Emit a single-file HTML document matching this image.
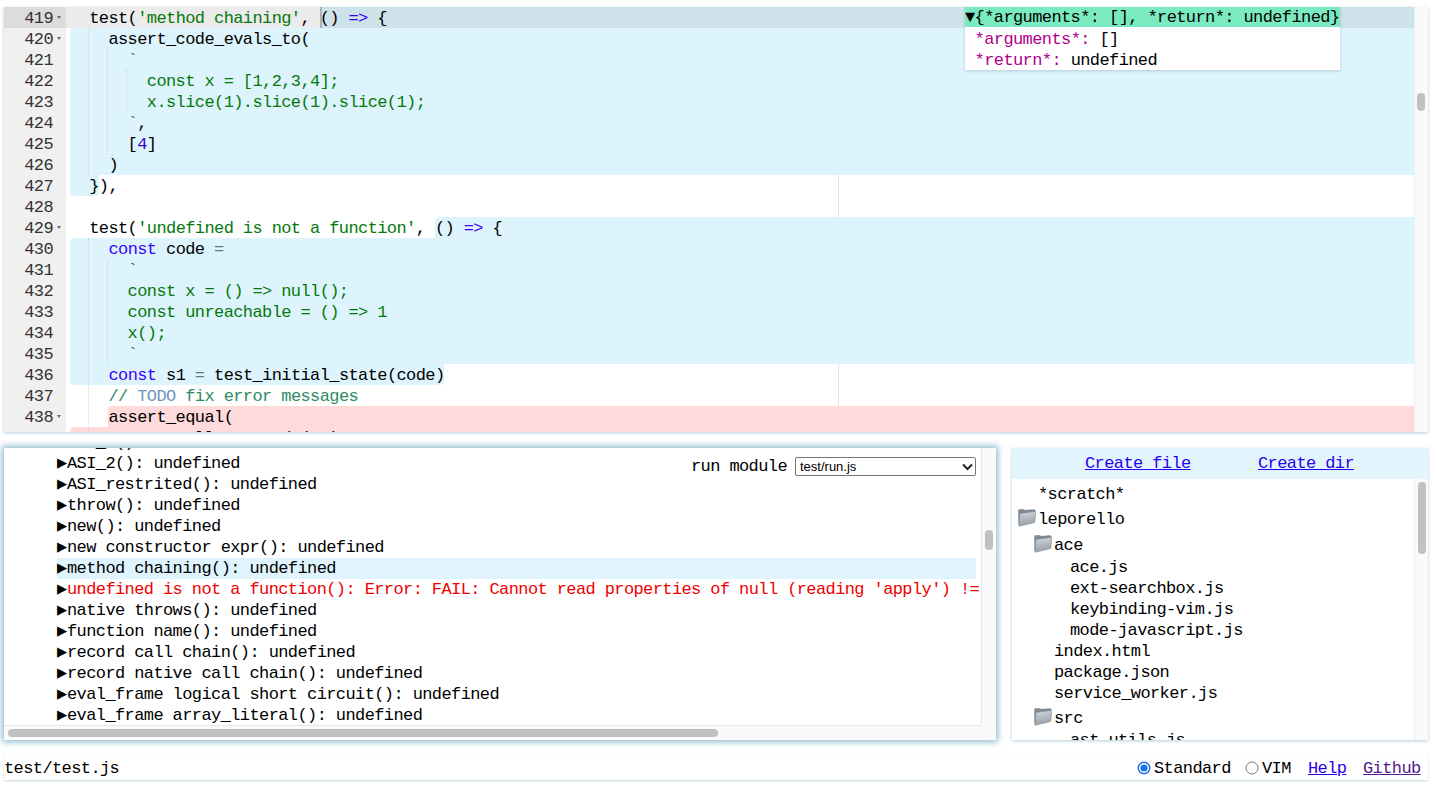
<!DOCTYPE html>
<html><head><meta charset="utf-8">
<style>
*{box-sizing:border-box;margin:0;padding:0}
html,body{width:1436px;height:788px;overflow:hidden;background:#fff;font-family:"Liberation Mono",monospace;font-size:17px;letter-spacing:-0.6px;color:#000}
.abs{position:absolute}
#editor{position:absolute;left:4px;top:7px;width:1424px;height:425px;overflow:hidden;background:#fff;box-shadow:0 1px 3px rgba(90,140,170,.45)}
#gutter{position:absolute;left:0;top:0;width:62px;height:425px;background:#f0f0f0;color:#333}
.gl{position:absolute;left:0;width:62px;height:21px;line-height:21px;text-align:right;padding-right:13px;padding-top:1px}
.gl.act{background:#dcdcdc}
.fold{position:absolute;left:53px;width:0;height:0;border-left:2.75px solid transparent;border-right:2.75px solid transparent;border-top:3.5px solid #6a6a6a}
#content{position:absolute;left:62px;top:0;width:1348px;height:425px;overflow:hidden}
.mk{position:absolute;height:21px}
.blue{background:#ddf4fc}
.red{background:#ffdada}
.ln{position:absolute;left:4px;height:21px;line-height:21px;white-space:pre;padding-top:1px}
.pm{position:absolute;left:772px;top:0;width:1px;height:425px;background:#e4e4e4}
.ig{position:absolute;width:0;border-left:1px dotted #d2d2d2;height:21px}
.k{color:#3c00ff}
.s{color:#06780b}
.n{color:#3c00d2}
.op{color:#66778a}
.c{color:#2f8a62}
.todo{color:#7294c0}
#vsb{position:absolute;left:1410px;top:0;width:14px;height:425px;background:#fafafa;border-left:1px solid #ececec}
.thumb{position:absolute;background:#c1c1c1;border-radius:4px}
#tip{position:absolute;left:961px;top:0;width:375px;height:63px;background:#fff;box-shadow:0 1px 3px rgba(100,130,150,.35)}
#tip .r{position:absolute;left:0;height:21px;line-height:21px;white-space:pre;width:375px}
.pk{color:#b0008a}

#calltree{position:absolute;left:4px;top:448px;width:992px;height:292px;background:#fff;overflow:hidden;box-shadow:0 0 6px 2px rgba(95,160,188,.7)}
#calltree .r{position:absolute;height:21px;line-height:21px;white-space:pre}
.tri{display:inline-block;width:10px}
.err{color:#ee0000}
#ct-vsb{position:absolute;left:977px;top:0;width:15px;height:277px;background:#fafafa;border-left:1px solid #e6e6e6}
#ct-hsb{position:absolute;left:0;top:277px;width:977px;height:15px;background:#fafafa;border-top:1px solid #e6e6e6}
#ct-corner{position:absolute;left:977px;top:277px;width:15px;height:15px;background:#fafafa}
#runmod{position:absolute;left:687px;top:8px;height:21px;line-height:21px;background:#fff;white-space:pre}
#sel{position:absolute;left:791px;top:9px;width:181px;height:19px;border:1px solid #767676;border-radius:2px;background:#fff;font-family:"Liberation Sans",sans-serif;font-size:13px;letter-spacing:0;line-height:17px;padding-left:4px}

#files{position:absolute;left:1012px;top:448px;width:416px;height:292px;background:#fff;overflow:hidden;box-shadow:0 1px 3px rgba(90,140,170,.45)}
#fhdr{position:absolute;left:0;top:0;width:416px;height:31px;background:#e2f5fc}
a{color:#2a00ee;text-decoration:underline}
#files .r{position:absolute;height:21px;line-height:21px;white-space:pre}
#f-vsb{position:absolute;left:402px;top:31px;width:14px;height:261px;background:#fafafa;border-left:1px solid #ececec}

#status{position:absolute;left:4px;top:756px;width:1424px;height:24px;background:#fff;box-shadow:0 1px 2px rgba(90,140,170,.35)}
</style></head><body>

<div id="editor">
 <div id="gutter">
  <div class="gl act" style="top:0">419</div>
  <div class="gl" style="top:21px">420</div>
  <div class="gl" style="top:42px">421</div>
  <div class="gl" style="top:63px">422</div>
  <div class="gl" style="top:84px">423</div>
  <div class="gl" style="top:105px">424</div>
  <div class="gl" style="top:126px">425</div>
  <div class="gl" style="top:147px">426</div>
  <div class="gl" style="top:168px">427</div>
  <div class="gl" style="top:189px">428</div>
  <div class="gl" style="top:210px">429</div>
  <div class="gl" style="top:231px">430</div>
  <div class="gl" style="top:252px">431</div>
  <div class="gl" style="top:273px">432</div>
  <div class="gl" style="top:294px">433</div>
  <div class="gl" style="top:315px">434</div>
  <div class="gl" style="top:336px">435</div>
  <div class="gl" style="top:357px">436</div>
  <div class="gl" style="top:378px">437</div>
  <div class="gl" style="top:399px">438</div>
  <div class="gl" style="top:420px">439</div>
  <div class="fold" style="top:9px"></div>
  <div class="fold" style="top:30px"></div>
  <div class="fold" style="top:219px"></div>
  <div class="fold" style="top:408px"></div>
 </div>
 <div id="content">
  <div class="pm"></div>
  <!-- markers -->
  <div class="mk" style="left:0;top:0;width:1348px;background:#ebebeb"></div>
  <div class="mk" style="left:254px;top:0;width:1094px;background:#cee2e9"></div>
  <div class="mk blue" style="left:4px;top:21px;width:1344px;height:147px;border-radius:4px 0 0 0"></div>
  <div class="mk blue" style="left:4px;top:168px;width:29px;border-radius:0 0 4px 4px"></div>
  <div class="mk blue" style="left:369px;top:210px;width:979px;border-radius:4px 0 0 0"></div>
  <div class="mk blue" style="left:4px;top:231px;width:1344px;height:126px;border-radius:4px 0 0 0"></div>
  <div class="mk blue" style="left:4px;top:357px;width:374px;border-radius:0 0 4px 4px"></div>
  <div class="mk red" style="left:42px;top:399px;width:1306px;border-radius:4px 0 0 0"></div>
  <div class="mk red" style="left:4px;top:420px;width:1344px;border-radius:4px 0 0 0"></div>
  <div class="abs" style="left:254px;top:0;width:2px;height:21px;background:rgba(0,0,0,.2)"></div>
  <!-- indent guides -->
  <div class="ig" style="left:22px;top:21px;height:147px"></div>
  <div class="ig" style="left:41px;top:42px;height:105px"></div>
  <div class="ig" style="left:60px;top:63px;height:42px"></div>
  <div class="ig" style="left:22px;top:231px;height:210px"></div>
  <div class="ig" style="left:41px;top:252px;height:105px"></div>
  <!-- lines -->
  <div class="ln" style="top:0">  test(<span class="s">'method chaining'</span>, () <span class="k">=&gt;</span> {</div>
  <div class="ln" style="top:21px">    assert_code_evals_to(</div>
  <div class="ln" style="top:42px">      <span class="s">`</span></div>
  <div class="ln" style="top:63px"><span class="s">        const x = [1,2,3,4];</span></div>
  <div class="ln" style="top:84px"><span class="s">        x.slice(1).slice(1).slice(1);</span></div>
  <div class="ln" style="top:105px">      <span class="s">`</span>,</div>
  <div class="ln" style="top:126px">      [<span class="n">4</span>]</div>
  <div class="ln" style="top:147px">    )</div>
  <div class="ln" style="top:168px">  }),</div>
  <div class="ln" style="top:210px">  test(<span class="s">'undefined is not a function'</span>, () <span class="k">=&gt;</span> {</div>
  <div class="ln" style="top:231px">    <span class="k">const</span> code <span class="op">=</span></div>
  <div class="ln" style="top:252px">      <span class="s">`</span></div>
  <div class="ln" style="top:273px"><span class="s">      const x = () =&gt; null();</span></div>
  <div class="ln" style="top:294px"><span class="s">      const unreachable = () =&gt; 1</span></div>
  <div class="ln" style="top:315px"><span class="s">      x();</span></div>
  <div class="ln" style="top:336px">      <span class="s">`</span></div>
  <div class="ln" style="top:357px">    <span class="k">const</span> s1 <span class="op">=</span> test_initial_state(code)</div>
  <div class="ln" style="top:378px">    <span class="c">// <span class="todo">TODO</span> fix error messages</span></div>
  <div class="ln" style="top:399px">    assert_equal(</div>
  <div class="ln" style="top:420px">      root_calltree_node(s1).error,</div>
 </div>
 <div id="vsb"><div class="thumb" style="left:2px;top:86px;width:8px;height:18px"></div></div>
 <div id="tip">
  <div class="r" style="top:0;height:20px;background:#7aeac0">▼{*arguments*: [], *return*: undefined}</div>
  <div class="r" style="top:22px"> <span class="pk">*arguments*:</span> []</div>
  <div class="r" style="top:43px"> <span class="pk">*return*:</span> undefined</div>
 </div>
</div>

<div id="calltree">
 <div class="r" style="left:53px;top:-16px"><span class="tri">▶</span>ASI_1(): undefined</div>
 <div class="r" style="left:53px;top:5px"><span class="tri">▶</span>ASI_2(): undefined</div>
 <div class="r" style="left:53px;top:26px"><span class="tri">▶</span>ASI_restrited(): undefined</div>
 <div class="r" style="left:53px;top:47px"><span class="tri">▶</span>throw(): undefined</div>
 <div class="r" style="left:53px;top:68px"><span class="tri">▶</span>new(): undefined</div>
 <div class="r" style="left:53px;top:89px"><span class="tri">▶</span>new constructor expr(): undefined</div>
 <div class="r" style="left:53px;top:110px;width:919px;background:#dff4fc"><span class="tri">▶</span>method chaining(): undefined</div>
 <div class="r" style="left:53px;top:131px"><span class="tri">▶</span><span class="err">undefined is not a function(): Error: FAIL: Cannot read properties of null (reading 'apply') !=</span></div>
 <div class="r" style="left:53px;top:152px"><span class="tri">▶</span>native throws(): undefined</div>
 <div class="r" style="left:53px;top:173px"><span class="tri">▶</span>function name(): undefined</div>
 <div class="r" style="left:53px;top:194px"><span class="tri">▶</span>record call chain(): undefined</div>
 <div class="r" style="left:53px;top:215px"><span class="tri">▶</span>record native call chain(): undefined</div>
 <div class="r" style="left:53px;top:236px"><span class="tri">▶</span>eval_frame logical short circuit(): undefined</div>
 <div class="r" style="left:53px;top:257px"><span class="tri">▶</span>eval_frame array_literal(): undefined</div>
 <div id="runmod">run module </div>
 <div id="sel">test/run.js<svg class="abs" style="left:166px;top:5px" width="11" height="8" viewBox="0 0 11 8"><path d="M1 1.5 L5.5 6 L10 1.5" fill="none" stroke="#222" stroke-width="2"/></svg></div>
 <div id="ct-vsb"><div class="thumb" style="left:3px;top:82px;width:8px;height:20px"></div></div>
 <div id="ct-corner"></div><div id="ct-hsb"><div class="thumb" style="left:4px;top:3px;width:710px;height:8px"></div></div>
</div>

<div id="files">
 <div id="fhdr">
  <a class="abs" style="left:73px;top:5px;line-height:21px">Create file</a>
  <a class="abs" style="left:246px;top:5px;line-height:21px">Create dir</a>
 </div>
 <div class="r" style="left:26px;top:36px">*scratch*</div>
 <div class="abs" style="left:6px;top:61px"><svg width="18" height="18" viewBox="0 0 18 18"><defs><linearGradient id="fg" x1="0" y1="0" x2="0.2" y2="1"><stop offset="0" stop-color="#d4d8db"/><stop offset="1" stop-color="#98a1a8"/></linearGradient></defs><path d="M0.2 1.4 L0.7 0.3 L6.2 0.3 L6.8 1.1 L16.2 0.2 L17.4 1.3 L17 12.5 L0.4 15.5 Z" fill="#7f8a93"/><path d="M1.9 4.5 L17.8 2.3 L16.6 13.6 L0.9 17.3 Z" fill="url(#fg)" stroke="#76818a" stroke-width="0.5"/></svg></div><div class="r" style="left:26px;top:61px">leporello</div>
 <div class="abs" style="left:22px;top:87px"><svg width="18" height="18" viewBox="0 0 18 18"><defs><linearGradient id="fg" x1="0" y1="0" x2="0.2" y2="1"><stop offset="0" stop-color="#d4d8db"/><stop offset="1" stop-color="#98a1a8"/></linearGradient></defs><path d="M0.2 1.4 L0.7 0.3 L6.2 0.3 L6.8 1.1 L16.2 0.2 L17.4 1.3 L17 12.5 L0.4 15.5 Z" fill="#7f8a93"/><path d="M1.9 4.5 L17.8 2.3 L16.6 13.6 L0.9 17.3 Z" fill="url(#fg)" stroke="#76818a" stroke-width="0.5"/></svg></div><div class="r" style="left:42px;top:87px">ace</div>
 <div class="r" style="left:58px;top:109px">ace.js</div>
 <div class="r" style="left:58px;top:130px">ext-searchbox.js</div>
 <div class="r" style="left:58px;top:151px">keybinding-vim.js</div>
 <div class="r" style="left:58px;top:172px">mode-javascript.js</div>
 <div class="r" style="left:42px;top:193px">index.html</div>
 <div class="r" style="left:42px;top:214px">package.json</div>
 <div class="r" style="left:42px;top:235px">service_worker.js</div>
 <div class="abs" style="left:22px;top:260px"><svg width="18" height="18" viewBox="0 0 18 18"><defs><linearGradient id="fg" x1="0" y1="0" x2="0.2" y2="1"><stop offset="0" stop-color="#d4d8db"/><stop offset="1" stop-color="#98a1a8"/></linearGradient></defs><path d="M0.2 1.4 L0.7 0.3 L6.2 0.3 L6.8 1.1 L16.2 0.2 L17.4 1.3 L17 12.5 L0.4 15.5 Z" fill="#7f8a93"/><path d="M1.9 4.5 L17.8 2.3 L16.6 13.6 L0.9 17.3 Z" fill="url(#fg)" stroke="#76818a" stroke-width="0.5"/></svg></div><div class="r" style="left:42px;top:260px">src</div>
 <div class="r" style="left:58px;top:282px">ast_utils.js</div>
 <div id="f-vsb"><div class="thumb" style="left:3px;top:3px;width:8px;height:72px"></div></div>
</div>

<div id="status">
 <div class="abs" style="left:0px;top:2px;line-height:21px">test/test.js</div>
 <svg class="abs" style="left:1133px;top:5px" width="14" height="14" viewBox="0 0 14 14"><circle cx="7" cy="7" r="6.5" fill="#1a73e8"/><circle cx="7" cy="7" r="5" fill="#fff"/><circle cx="7" cy="7" r="3.6" fill="#1a73e8"/></svg>
 <div class="abs" style="left:1150px;top:2px;line-height:21px">Standard</div>
 <svg class="abs" style="left:1241px;top:5px" width="14" height="14" viewBox="0 0 14 14"><circle cx="7" cy="7" r="6" fill="#fff" stroke="#767676" stroke-width="1"/></svg>
 <div class="abs" style="left:1258px;top:2px;line-height:21px">VIM</div>
 <a class="abs" style="left:1304px;top:2px;line-height:21px">Help</a>
 <a class="abs" style="left:1359px;top:2px;line-height:21px;color:#551a8b">Github</a>
</div>
</body></html>
